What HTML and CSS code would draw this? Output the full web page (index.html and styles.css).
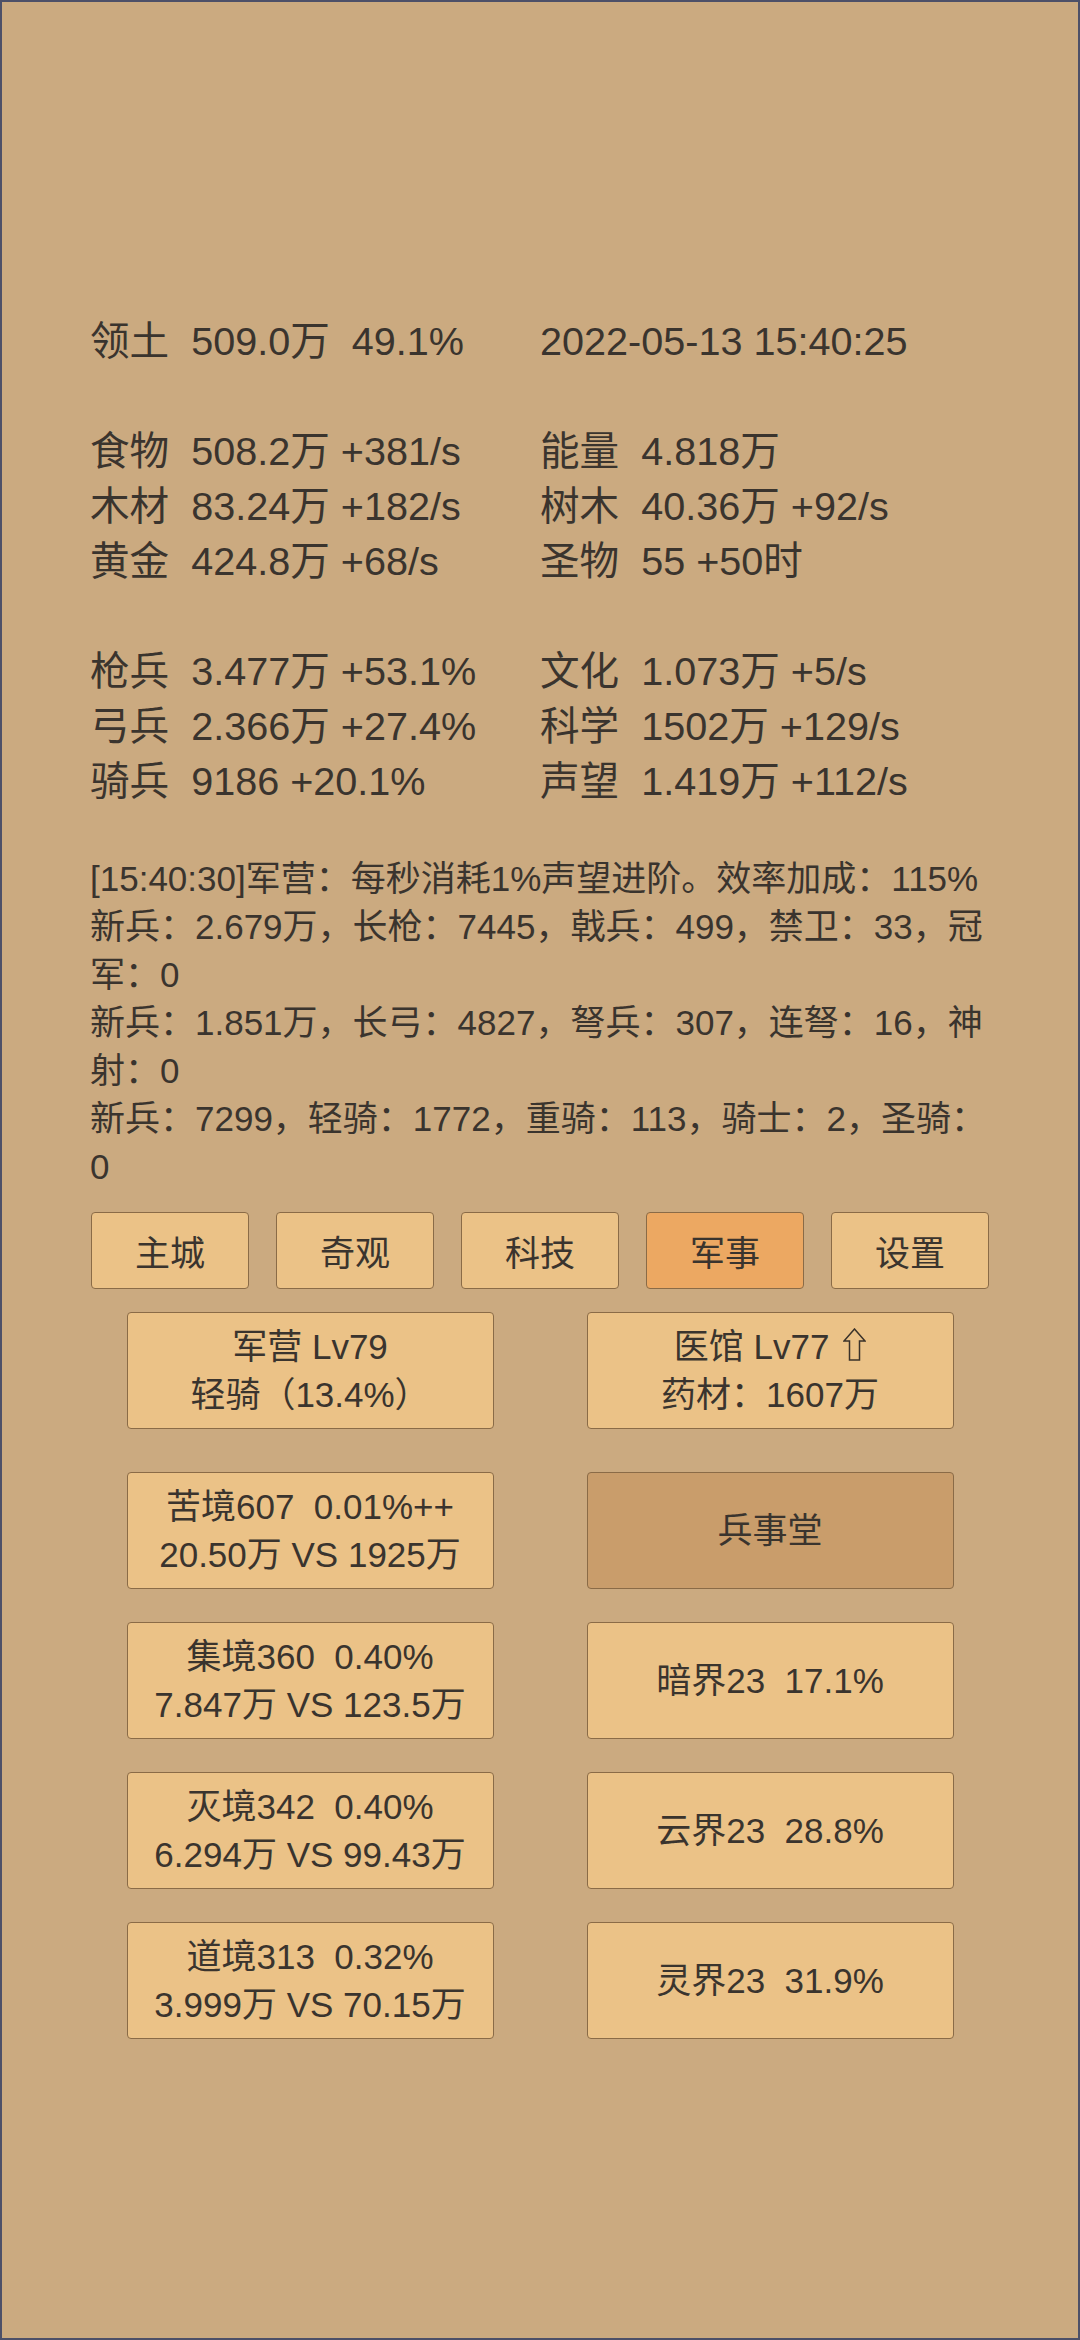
FILE: index.html
```html
<!DOCTYPE html>
<html lang="zh-CN">
<head>
<meta charset="utf-8">
<title>军事</title>
<link rel="stylesheet" href="styles.css">
</head>
<body>
<div class="screen">
  <div class="stats">
    <div class="group">
      <span class="cell">领土  509.0万  49.1%</span>
      <span class="cell">2022-05-13 15:40:25</span>
    </div>
    <div class="group">
      <span class="cell">食物  508.2万 +381/s</span>
      <span class="cell">能量  4.818万</span>
      <span class="cell">木材  83.24万 +182/s</span>
      <span class="cell">树木  40.36万 +92/s</span>
      <span class="cell">黄金  424.8万 +68/s</span>
      <span class="cell">圣物  55 +50时</span>
    </div>
    <div class="group">
      <span class="cell">枪兵  3.477万 +53.1%</span>
      <span class="cell">文化  1.073万 +5/s</span>
      <span class="cell">弓兵  2.366万 +27.4%</span>
      <span class="cell">科学  1502万 +129/s</span>
      <span class="cell">骑兵  9186 +20.1%</span>
      <span class="cell">声望  1.419万 +112/s</span>
    </div>
  </div>

  <div class="log">
    <p>[15:40:30]军营：每秒消耗1%声望进阶。效率加成：115%</p>
    <p>新兵：2.679万，长枪：7445，戟兵：499，禁卫：33，冠军：0</p>
    <p>新兵：1.851万，长弓：4827，弩兵：307，连弩：16，神射：0</p>
    <p>新兵：7299，轻骑：1772，重骑：113，骑士：2，圣骑：0</p>
  </div>

  <div class="tabs">
    <div class="tab">主城</div>
    <div class="tab">奇观</div>
    <div class="tab">科技</div>
    <div class="tab active">军事</div>
    <div class="tab">设置</div>
  </div>

  <div class="cards">
    <div class="card first"><span>军营 Lv79</span><span>轻骑（13.4%）</span></div>
    <div class="card first"><span>医馆 Lv77 <svg class="up" width="23" height="33" viewBox="0 0 23 33"><polygon points="11.5,1 22,13 16.5,13 16.5,32 6.5,32 6.5,13 1,13" fill="none" stroke="#3a322a" stroke-width="1.5" stroke-linejoin="miter"/></svg></span><span>药材：1607万</span></div>
    <div class="card"><span>苦境607  0.01%++</span><span>20.50万 VS 1925万</span></div>
    <div class="card dim"><span>兵事堂</span></div>
    <div class="card"><span>集境360  0.40%</span><span>7.847万 VS 123.5万</span></div>
    <div class="card"><span>暗界23  17.1%</span></div>
    <div class="card"><span>灭境342  0.40%</span><span>6.294万 VS 99.43万</span></div>
    <div class="card"><span>云界23  28.8%</span></div>
    <div class="card"><span>道境313  0.32%</span><span>3.999万 VS 70.15万</span></div>
    <div class="card"><span>灵界23  31.9%</span></div>
  </div>
</div>
</body>
</html>
```

FILE: styles.css
```css
html, body {
  margin: 0;
  padding: 0;
}

body {
  background: #cbaa80;
  font-family: "Liberation Sans", "Noto Sans CJK SC", sans-serif;
  color: #3a342e;
}

.screen {
  width: 1080px;
  height: 2340px;
  box-sizing: border-box;
  border: 2px solid #4d5068;
  background: #cbaa80;
  padding: 312px 0 0 88px;
  overflow: hidden;
}

.stats {
  font-size: 39.6px;
  line-height: 55px;
}

.group {
  display: grid;
  grid-template-columns: 450px auto;
  margin-bottom: 55px;
}

.group:last-child {
  margin-bottom: 0;
}

.cell {
  white-space: pre;
}

.log {
  margin-top: 46px;
  width: 905px;
  font-size: 35px;
  line-height: 48px;
}

.log p {
  margin: 0;
}

.tabs {
  margin-top: 21px;
  margin-left: 1px;
  display: flex;
  gap: 27px;
}

.tab {
  width: 158px;
  height: 77px;
  box-sizing: border-box;
  border: 1px solid #8a6b47;
  border-radius: 4px;
  background: #ebc287;
  font-size: 35px;
  display: flex;
  align-items: center;
  justify-content: center;
}

.tab.active {
  background: #eca862;
}

.cards {
  margin-top: 23px;
  width: 900px;
  display: grid;
  grid-template-columns: 367px 367px;
  justify-content: center;
  column-gap: 93px;
  row-gap: 33px;
}

.card {
  height: 117px;
  box-sizing: border-box;
  border: 1px solid #8a6b47;
  border-radius: 4px;
  background: #ebc287;
  font-size: 35px;
  line-height: 48px;
  display: flex;
  flex-direction: column;
  align-items: center;
  justify-content: center;
  white-space: pre;
}

.card.first {
  margin-bottom: 10px;
}

.card.dim {
  background: #c99d6b;
}

.up {
  vertical-align: -2px;
  margin-left: 4px;
}
```
